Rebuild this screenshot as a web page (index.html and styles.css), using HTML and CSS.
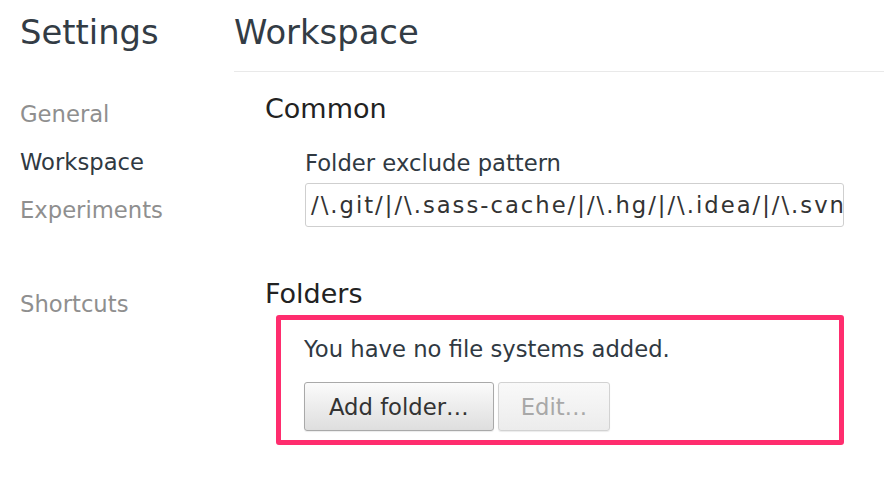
FILE: index.html
```html
<!DOCTYPE html>
<html>
<head>
<meta charset="utf-8">
<link rel="stylesheet" href="styles.css">
</head>
<body>
<div class="page">
  <aside class="sidebar">
    <h1 class="title">Settings</h1>
    <nav class="nav">
      <div class="nav-item">General</div>
      <div class="nav-item active">Workspace</div>
      <div class="nav-item">Experiments</div>
      <div class="nav-item nav-gap">Shortcuts</div>
    </nav>
  </aside>
  <main class="main">
    <header class="main-header">
      <h1 class="title">Workspace</h1>
    </header>
    <section class="section">
      <h2 class="section-title">Common</h2>
      <div class="field">
        <label class="field-label">Folder exclude pattern</label>
        <div class="text-input">/\.git/|/\.sass-cache/|/\.hg/|/\.idea/|/\.svn/|/\.cache/|/\.project/</div>
      </div>
    </section>
    <section class="section folders">
      <h2 class="section-title">Folders</h2>
      <div class="highlight">
        <div class="empty-text">You have no file systems added.</div>
        <div class="button-row">
          <button class="btn">Add folder…</button>
          <button class="btn disabled">Edit…</button>
        </div>
      </div>
    </section>
  </main>
</div>
</body>
</html>
```
FILE: styles.css
```css
html, body {
  margin: 0;
  padding: 0;
  background: #ffffff;
}
body {
  font-family: "DejaVu Sans", "Liberation Sans", sans-serif;
  color: #303942;
  width: 884px;
  height: 494px;
  overflow: hidden;
}
.page {
  display: flex;
  flex-direction: row;
  height: 494px;
}
.sidebar {
  width: 214px;
  padding-left: 20px;
  flex-shrink: 0;
}
.title {
  margin: 0;
  padding-top: 13px;
  font-size: 33.8px;
  line-height: 40px;
  font-weight: normal;
  color: #333c45;
}
.nav {
  margin-top: 37px;
}
.nav-item {
  font-size: 22.7px;
  line-height: 48px;
  color: #8f8f8f;
}
.nav-item.active {
  color: #303942;
}
.nav-gap {
  margin-top: 46px;
}
.main {
  flex: 1;
  min-width: 0;
}
.main-header {
  padding-bottom: 18px;
  border-bottom: 1px solid #e9e9e9;
}
.section {
  padding-left: 31px;
}
.section-title {
  margin: 21px 0 0 0;
  font-size: 27px;
  line-height: 32px;
  font-weight: normal;
  color: #222222;
}
.field {
  margin-top: 25px;
  padding-left: 40px;
}
.field-label {
  display: block;
  font-size: 22.7px;
  line-height: 26px;
  color: #303942;
}
.text-input {
  margin-top: 7px;
  width: 527px;
  height: 42px;
  border: 1px solid #cfcfcf;
  border-radius: 3px;
  padding: 0 5px;
  font-size: 22.7px;
  line-height: 42px;
  letter-spacing: 2px;
  color: #333333;
  white-space: nowrap;
  overflow: hidden;
}
.folders .section-title {
  margin-top: 51px;
}
.highlight {
  margin-top: 5px;
  margin-left: 11px;
  width: 535px;
  height: 120px;
  border: 5px solid #ff2d6e;
  border-radius: 3px;
  padding: 0 0 0 23px;
}
.empty-text {
  padding-top: 16px;
  font-size: 22.7px;
  line-height: 26px;
  color: #303942;
}
.button-row {
  display: flex;
  gap: 4px;
  margin-top: 20px;
}
.btn {
  font-family: "DejaVu Sans", "Liberation Sans", sans-serif;
  font-size: 22.7px;
  height: 49px;
  padding: 0 22px;
  border: 1px solid #a9a9a9;
  border-radius: 3px;
  background: linear-gradient(#fbfbfb, #dedede);
  color: #333333;
  box-shadow: 0 1px 1px rgba(0, 0, 0, 0.08);
}
.btn:first-child {
  padding: 0 24px 0 24px;
}
.btn.disabled {
  border-color: #d2d2d2;
  background: linear-gradient(#f9f9f9, #ececec);
  color: #a8a8a8;
}
```
